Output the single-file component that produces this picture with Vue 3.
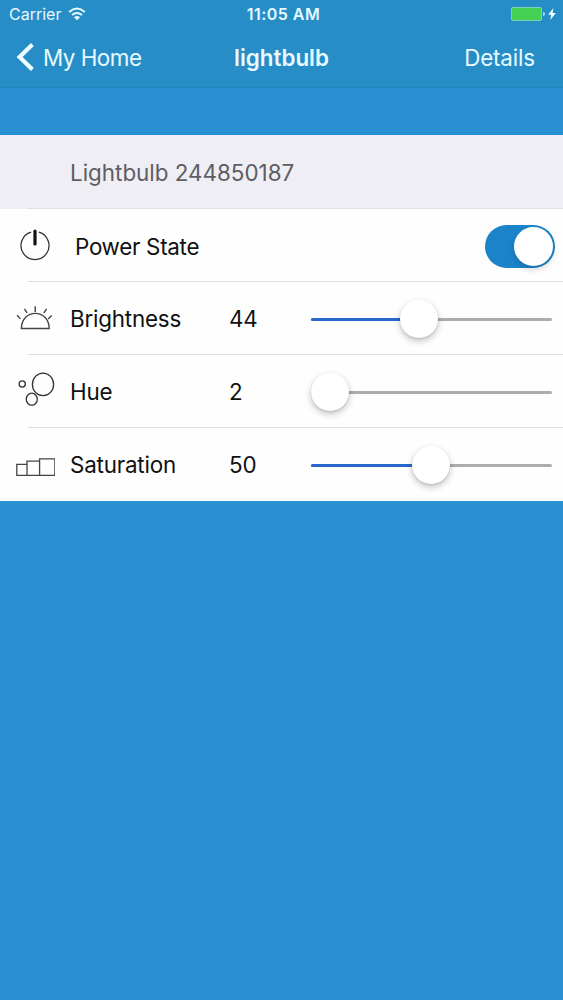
<script setup>
const sliders = [
  { kind: 'brightness', label: 'Brightness', value: 44, position: 43.8 },
  { kind: 'hue', label: 'Hue', value: 2, position: 0.2 },
  { kind: 'saturation', label: 'Saturation', value: 50, position: 49.7 }
]
</script>

<template>
  <div class="screen">
    <header class="top">
      <div class="status">
        <div class="carrier">
          <span class="carrier-name">Carrier</span>
          <svg width="18" height="14" viewBox="0 0 18 14" fill="none" stroke="#e9fbff" stroke-width="2">
            <path d="M1.2 4.9Q9-1.9 16.8 4.9M4 8.1Q9 3.8 14 8.1" />
            <path d="M6 10.3Q9 7.8 12 10.3L9 13.3Z" fill="#e9fbff" stroke="none" />
          </svg>
        </div>
        <div class="time">11:05 AM</div>
        <div class="power">
          <div class="battery"></div>
          <div class="battery-tip"></div>
          <svg width="8" height="12" viewBox="0 0 8 12"><path d="M5.4 0 .2 6.7h3L2.3 12l5.5-7H4.6Z" fill="#f0fdff" /></svg>
        </div>
      </div>
      <nav class="nav">
        <div class="back">
          <svg width="18" height="28" viewBox="0 0 18 28" fill="none" stroke="#effdff" stroke-width="4.2"><path d="M16.4 1.6 3.6 14 16.4 26.4" /></svg>
          <span class="back-label">My Home</span>
        </div>
        <div class="title">lightbulb</div>
        <div class="details">Details</div>
      </nav>
    </header>

    <main class="group">
      <div class="row heading">Lightbulb 244850187</div>
      <div class="row">
        <div class="icon">
          <svg width="40" height="40" viewBox="0 0 40 40" fill="none" stroke="#333">
            <path d="M16.1 7.1A14 14 0 1 0 23.9 7.1" stroke-width="1.3" />
            <path d="M20 6.2V19" stroke="#111" stroke-width="3.2" stroke-linecap="round" />
          </svg>
        </div>
        <div class="label power-label">Power State</div>
        <div class="switch"><div class="switch-knob"></div></div>
      </div>
      <div v-for="s in sliders" :key="s.kind" class="row" :class="s.kind">
        <div class="icon">
          <svg v-if="s.kind === 'brightness'" width="40" height="40" viewBox="0 0 40 40" fill="none" stroke="#444" stroke-width="1.4">
            <path d="M6.4 30.5C6.4 10.3 34.2 10.3 34.2 30.5Z" />
            <path d="M2.1 17.3 5.4 20.9M9.5 10.9 12 14.8M20.2 8.3V14M31.6 10.9 28.8 15.1M36.7 17.5 33.2 21.1" />
          </svg>
          <svg v-else-if="s.kind === 'hue'" width="40" height="40" viewBox="0 0 40 40" fill="none" stroke="#333" stroke-width="1.3">
            <ellipse cx="28" cy="13.4" rx="10.6" ry="11.3" />
            <circle cx="7.2" cy="13" r="3.1" />
            <ellipse cx="16.8" cy="28.2" rx="5.5" ry="6" />
          </svg>
          <svg v-else width="40" height="40" viewBox="0 0 40 40" fill="none" stroke="#444" stroke-width="1.3">
            <path d="M1.8 19.3H12V30.3H1.8ZM12 16.2H24.6V30.3H12ZM24.6 13.8H39.9V30.3H24.6Z" />
          </svg>
        </div>
        <div class="label">{{ s.label }}</div>
        <div class="value">{{ s.value }}</div>
        <div class="slider" :style="{ '--pos': s.position / 100 }">
          <div class="track"></div>
          <div class="fill"></div>
          <div class="thumb"></div>
        </div>
      </div>
    </main>
  </div>
</template>

<style>
body { background: #2991d3; }
</style>

<style scoped>
.screen {
  height: 1000px;
  background: #2991d3;
  font-family: Inter, "Liberation Sans", sans-serif;
  font-size: 22.4px;
  color: #111;
  white-space: nowrap;
  overflow: hidden;
}
.top {
  box-sizing: border-box;
  height: 88px;
  background: #268dc7;
  border-bottom: 1px solid #2685bd;
  color: #e6faff;
}
.status {
  display: grid;
  grid-template-columns: 1fr 100px 1fr;
  align-items: center;
  height: 28px;
}
.carrier { display: flex; align-items: center; gap: 7px; padding-left: 9px; font-size: 16px; }
.carrier svg { margin-top: -1px; }
.time { padding-left: 4px; font-size: 16px; font-weight: 600; letter-spacing: .45px; text-align: center; }
.power { display: flex; justify-content: flex-end; align-items: center; padding-right: 7px; }
.battery {
  box-sizing: border-box;
  width: 31px;
  height: 14px;
  border: 1px solid #7ed0bd;
  border-radius: 2px;
  background: #44d152;
}
.battery-tip { width: 2px; height: 4px; margin: 0 3px 0 1px; background: #a5dff0; border-radius: 0 2px 2px 0; }
.nav {
  display: grid;
  grid-template-columns: 1fr 120px 1fr;
  align-items: center;
  height: 58px;
}
.back { display: flex; align-items: center; gap: 9px; padding-left: 16px; }
.back-label { letter-spacing: -.5px; }
.title { font-weight: 600; text-align: center; }
.details { padding-right: 28px; text-align: right; letter-spacing: -.15px; }
.group { margin-top: 47px; background: #fefefe; }
.row {
  display: flex;
  align-items: center;
  box-sizing: border-box;
  height: 73.2px;
  padding-left: 15px;
  background: linear-gradient(#dedee0, #dedee0) 28px 100% / 100% 1px no-repeat;
}
.row:last-child { background: none; }
.heading {
  height: 73.5px;
  padding: 1px 0 0 70px;
  background-color: #efeef4;
  color: #5d5d64;
}
.icon { width: 40px; height: 40px; margin-right: 15px; }
.icon svg { display: block; }
.label { width: 159px; letter-spacing: -.2px; }
.power-label { padding-left: 5px; margin-top: 2px; letter-spacing: -.3px; }
.value { width: 82px; letter-spacing: -.2px; }
.switch {
  box-sizing: border-box;
  width: 70px;
  height: 43px;
  margin: 3px 8px 0 auto;
  padding: 2px;
  border-radius: 22px;
  background: #1b84c9;
}
.switch-knob {
  width: 39px;
  height: 39px;
  margin-left: auto;
  border-radius: 50%;
  background: #fff;
  box-shadow: 0 4px 6px rgba(0, 0, 0, .15);
}
.slider { position: relative; width: 241px; height: 40px; margin-top: 3px; }
.track, .fill {
  position: absolute;
  left: 0;
  top: 18px;
  height: 3px;
  border-radius: 2px;
}
.track { width: 100%; background: #acabae; }
.fill { width: calc(var(--pos) * 100%); background: #2868cc; }
.thumb {
  position: absolute;
  left: calc(var(--pos) * (100% - 38px));
  top: 0;
  width: 38px;
  height: 38px;
  border-radius: 50%;
  background: #fff;
  box-shadow: 0 3px 7px rgba(0, 0, 0, .24), 0 1px 2px rgba(0, 0, 0, .1);
}
</style>
